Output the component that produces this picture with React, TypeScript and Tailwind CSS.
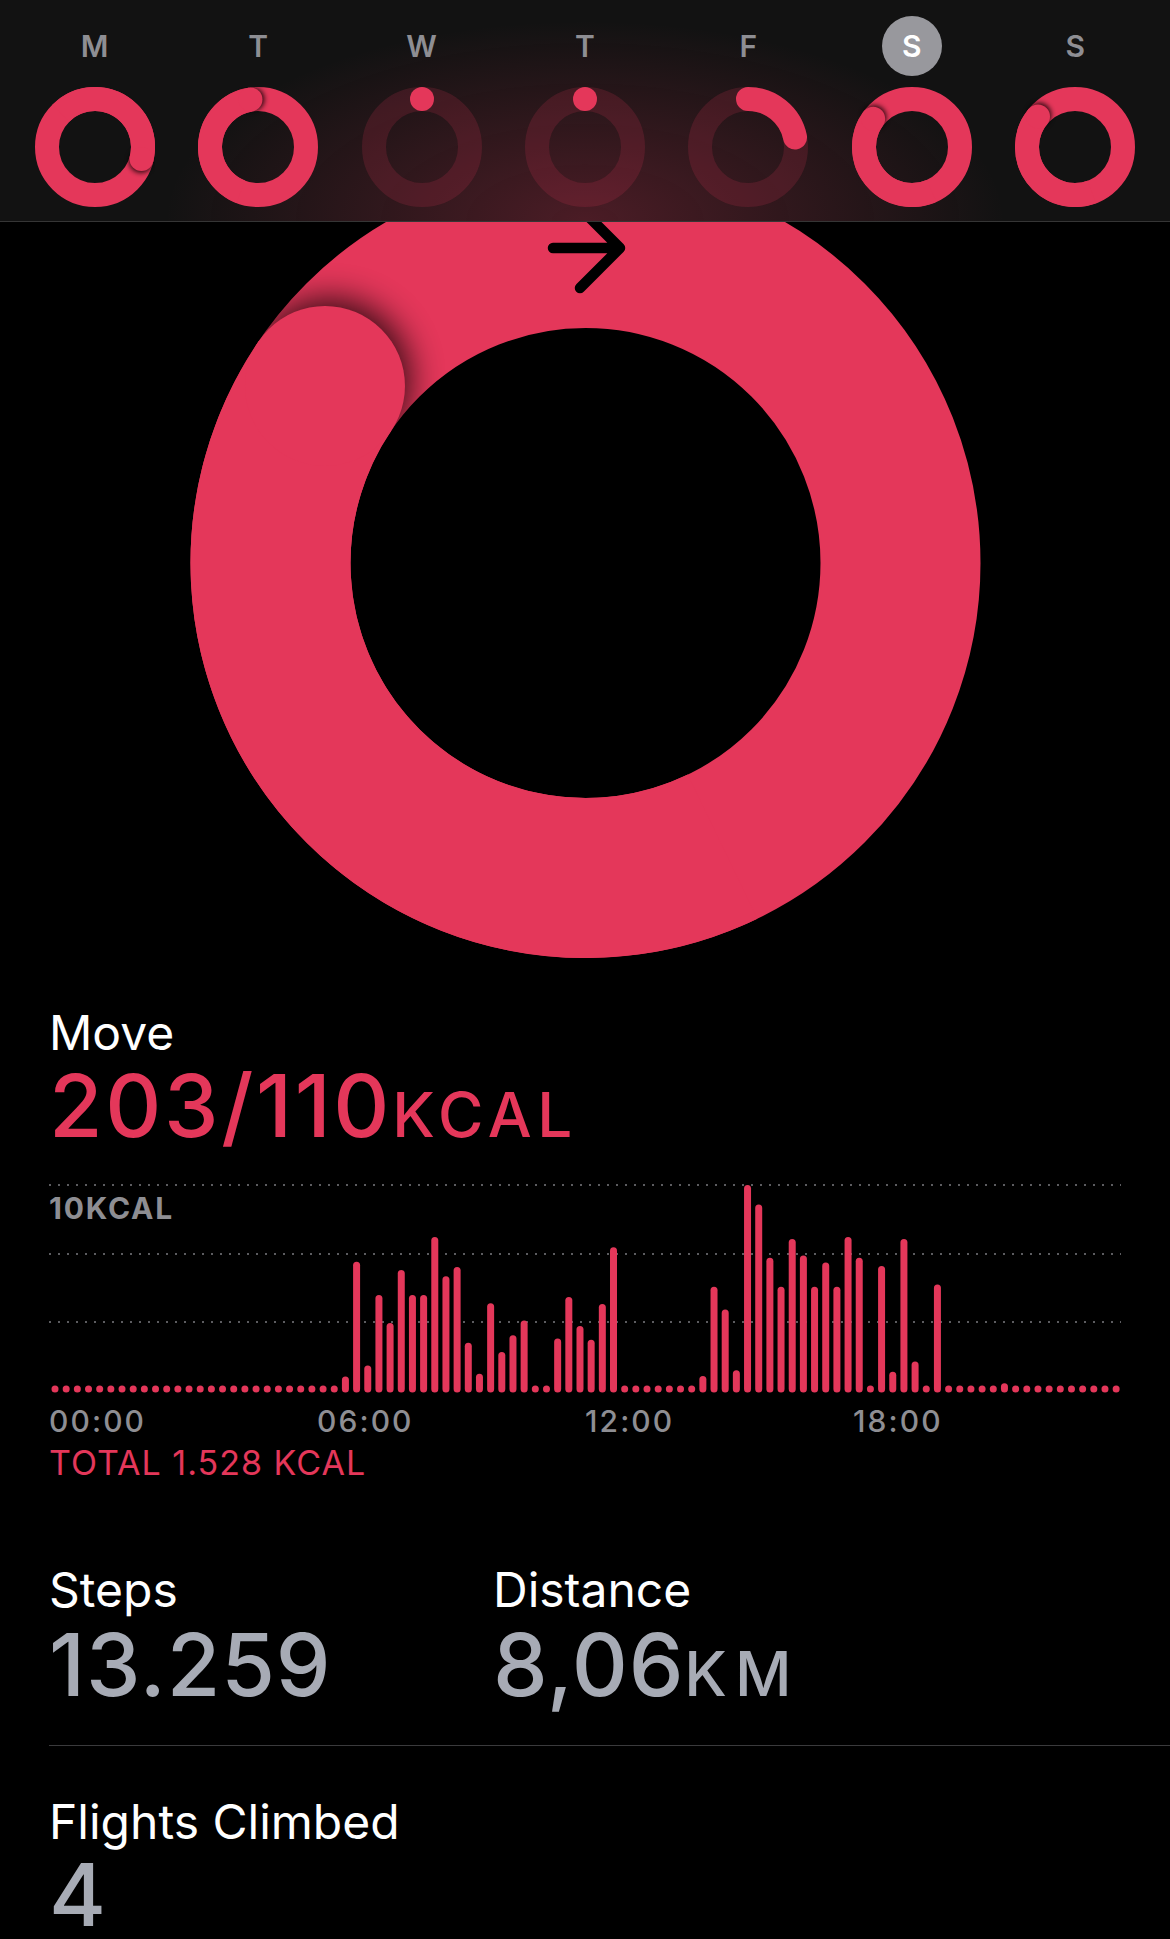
import React from "react";

const RED = "#e4375a";

// angle in degrees, measured clockwise from 12 o'clock
function pt(cx: number, cy: number, r: number, deg: number): [number, number] {
  const a = (deg * Math.PI) / 180;
  return [cx + r * Math.sin(a), cy - r * Math.cos(a)];
}

function arc(cx: number, cy: number, r: number, from: number, to: number) {
  const [x1, y1] = pt(cx, cy, r, from);
  const [x2, y2] = pt(cx, cy, r, to);
  const large = to - from > 180 ? 1 : 0;
  return `M ${x1} ${y1} A ${r} ${r} 0 ${large} 1 ${x2} ${y2}`;
}

type RingProps = {
  id: string;
  width: number;
  height: number;
  cx: number;
  cy: number;
  r: number;
  sw: number;
  progress: number;
  blur: number;
  shift: number;
  children?: React.ReactNode;
};

function Ring({ id, width, height, cx, cy, r, sw, progress, blur, shift, children }: RingProps) {
  const full = progress >= 0.95;
  const end = full ? (progress * 360) % 360 : progress * 360;
  const [ex, ey] = pt(cx, cy, r, end);
  const rad = (end * Math.PI) / 180;
  // tangent in clockwise direction
  const tx = Math.cos(rad);
  const ty = Math.sin(rad);

  return (
    <svg width={width} height={height} viewBox={`0 0 ${width} ${height}`} className="block">
      <defs>
        <filter id={id} x="-100%" y="-100%" width="300%" height="300%">
          <feGaussianBlur stdDeviation={blur} />
        </filter>
      </defs>
      {full ? (
        <>
          <circle cx={cx} cy={cy} r={r} fill="none" stroke={RED} strokeWidth={sw} />
          <circle
            cx={ex + tx * shift}
            cy={ey + ty * shift}
            r={sw / 2}
            fill="#000"
            opacity={0.8}
            filter={`url(#${id})`}
          />
          <path d={arc(cx, cy, r, end - 150, end)} fill="none" stroke={RED} strokeWidth={sw} />
          <circle cx={ex} cy={ey} r={sw / 2} fill={RED} />
        </>
      ) : (
        <>
          <circle cx={cx} cy={cy} r={r} fill="none" stroke={RED} strokeOpacity={0.17} strokeWidth={sw} />
          {progress === 0 ? (
            <circle cx={cx} cy={cy - r} r={sw / 2} fill={RED} />
          ) : (
            <path d={arc(cx, cy, r, 0, end)} fill="none" stroke={RED} strokeWidth={sw} strokeLinecap="round" />
          )}
        </>
      )}
      {children}
    </svg>
  );
}

const days = [
  { label: "M", progress: 1.29 },
  { label: "T", progress: 0.975 },
  { label: "W", progress: 0 },
  { label: "T", progress: 0 },
  { label: "F", progress: 0.218 },
  { label: "S", progress: 1.85, selected: true },
  { label: "S", progress: 1.86 },
];

// 15 minute buckets, share of the 10 kcal top line
const bars: number[] = Array(96).fill(0);
const filled: Record<number, number> = {
  26: 0.077, 27: 0.63, 28: 0.13, 29: 0.47, 30: 0.335, 31: 0.59, 32: 0.47, 33: 0.47,
  34: 0.75, 35: 0.56, 36: 0.605, 37: 0.24, 38: 0.09, 39: 0.43, 40: 0.195, 41: 0.276,
  42: 0.347, 45: 0.26, 46: 0.46, 47: 0.32, 48: 0.254, 49: 0.426, 50: 0.7,
  58: 0.08, 59: 0.51, 60: 0.4, 61: 0.107, 62: 1.0, 63: 0.906, 64: 0.65, 65: 0.51,
  66: 0.74, 67: 0.66, 68: 0.51, 69: 0.626, 70: 0.51, 71: 0.75, 72: 0.65, 74: 0.61,
  75: 0.1, 76: 0.74, 77: 0.15, 79: 0.52, 85: 0.045,
};
Object.entries(filled).forEach(([k, v]) => {
  bars[Number(k)] = v;
});

function MoveChart() {
  const bottom = 210.5;
  return (
    <div className="relative w-[1072px]">
      <svg width={1072} height={214} viewBox="0 0 1072 214" className="block">
        {[3, 72, 140].map((y) => (
          <line key={y} x1={0} x2={1072} y1={y} y2={y} stroke="#5c5c60" strokeWidth={2} strokeDasharray="2 7" />
        ))}
        {bars.map((v, i) => {
          const cx = 6 + i * 11.17;
          const h = Math.max(7, v * 207.5);
          return <rect key={i} x={cx - 3.5} y={bottom - h} width={7} height={h} rx={3.5} fill={RED} />;
        })}
      </svg>
      <div className="absolute left-0 top-[11px] text-[30px] font-bold leading-none tracking-[0.06em] text-[#8e8e93]">
        10KCAL
      </div>
    </div>
  );
}

export default function App() {
  return (
    <div className="h-[1939px] overflow-hidden bg-black [font-family:Inter,sans-serif]">
      <header className="relative z-10 grid h-[222px] grid-cols-7 border-b border-white/15 bg-[#121212] bg-[radial-gradient(ellipse_420px_200px_at_50%_100%,rgba(229,55,90,0.27),rgba(229,55,90,0))] px-[13px] pt-[16px]">
        {days.map((d, i) => (
          <div key={i} className="flex flex-col items-center">
            <div
              className={`flex h-[60px] w-[60px] items-center justify-center rounded-full text-[30px] font-semibold leading-none ${
                d.selected ? "bg-[#98989d] text-white" : "text-[#8e8e93]"
              }`}
            >
              {d.label}
            </div>
            <div className="mt-[11px]">
              <Ring
                id={`day-${i}`}
                width={120}
                height={120}
                cx={60}
                cy={60}
                r={48}
                sw={24}
                progress={d.progress}
                blur={2.5}
                shift={2}
              />
            </div>
          </div>
        ))}
      </header>

      <div className="-mt-[54px]">
        <Ring id="big" width={1170} height={790} cx={585.5} cy={395} r={315} sw={160} progress={1.845} blur={17} shift={8}>
          <path
            d="M 553 80 H 620 M 580 40 L 620 80 L 580 120"
            fill="none"
            stroke="#000"
            strokeWidth={10.5}
            strokeLinecap="round"
            strokeLinejoin="round"
          />
        </Ring>
      </div>

      <div className="pl-[49px]">
        <div className="mt-[51px] text-[48px] leading-none text-white">Move</div>
        <div className="mt-[5px] text-[87px] font-medium leading-none tracking-[0.03em] text-[#e4375a]">
          203/110<span className="text-[62px] tracking-[0.09em]">KCAL</span>
        </div>

        <div className="mt-[33px]">
          <MoveChart />
        </div>

        <div className="mt-[10px] grid w-[1072px] grid-cols-4 text-[30px] font-medium leading-none tracking-[0.07em] text-[#8e8e93]">
          <span>00:00</span>
          <span>06:00</span>
          <span>12:00</span>
          <span>18:00</span>
        </div>
        <div className="mt-[10px] text-[34px] leading-none tracking-[0.03em] text-[#e4375a]">TOTAL 1.528 KCAL</div>

        <div className="mt-[86px] flex">
          <div className="w-[444px]">
            <div className="text-[48px] leading-none text-white">Steps</div>
            <div className="mt-[7px] text-[87px] font-medium leading-none tracking-[0.01em] text-[#a7abb5]">13.259</div>
          </div>
          <div>
            <div className="text-[48px] leading-none text-white">Distance</div>
            <div className="mt-[7px] text-[87px] font-medium leading-none tracking-[0.01em] text-[#a7abb5]">
              8,06<span className="text-[62px] tracking-[0.13em]">KM</span>
            </div>
          </div>
        </div>

        <div className="mt-[37px] h-px bg-[#3a3a3c]" />

        <div className="mt-[52px] text-[48px] leading-none text-white">Flights Climbed</div>
        <div className="mt-[5px] text-[87px] font-medium leading-none text-[#a7abb5]">4</div>
      </div>
    </div>
  );
}
